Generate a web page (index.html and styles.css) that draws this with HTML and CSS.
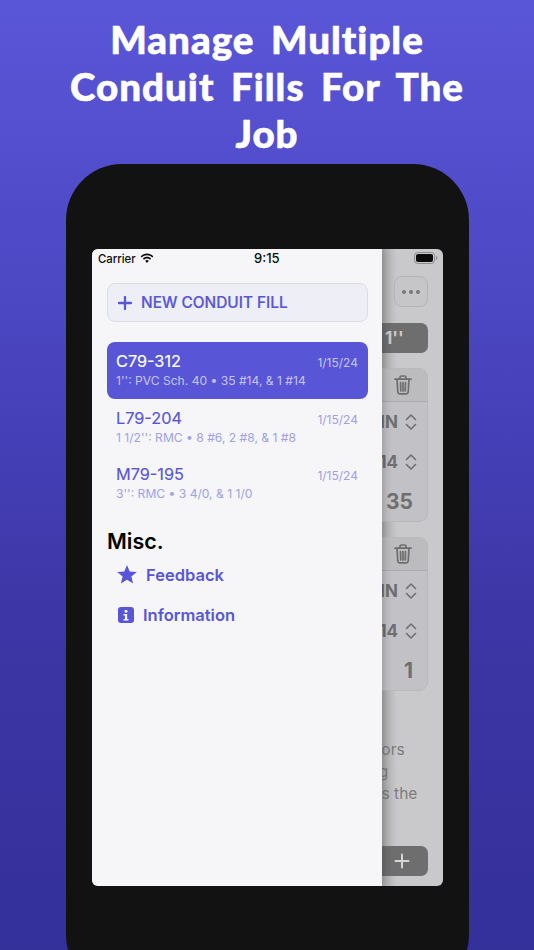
FILE: index.html
```html
<!DOCTYPE html>
<html lang="en">
<head>
<meta charset="utf-8">
<title>Manage Multiple Conduit Fills</title>
<link rel="stylesheet" href="styles.css">
</head>
<body>
<h1 class="headline">Manage Multiple Conduit Fills For The Job</h1>
<div class="stage">
<div class="phone">
  <div class="screen">
    <div class="main">
      <div class="battery-row">
        <svg class="battery" viewBox="0 0 24 12"><rect x="0.5" y="0.5" width="20" height="11" rx="3.2" fill="none" stroke="#8c8c8c"/><rect x="2" y="2" width="17" height="8" rx="2" fill="#0a0a0a"/><path d="M22 4v4c.8-.3 1.4-1.1 1.4-2s-.6-1.700-1.400-2z" fill="#8c8c8c"/></svg>
      </div>
      <div class="more-row"><div class="more"><i></i><i></i><i></i></div></div>
      <div class="size-pill">1''</div>
      <div class="card">
        <div class="card-head">
          <svg class="trash" viewBox="0 0 18 20"><path d="M1 4.200h16M6 4V2.600C6 1.700 6.700 1 7.600 1h2.800c.9 0 1.600.7 1.600 1.600V4M3 4.500l.8 12.500c.1 1 .8 1.800 1.900 1.800h6.600c1.100 0 1.800-.8 1.900-1.800L15 4.500M6.500 7.500l.3 8.500M9 7.500V16M11.500 7.500l-.3 8.500" fill="none" stroke="#6d6d6d" stroke-width="1.700" stroke-linecap="round"/></svg>
        </div>
        <div class="card-row"><span>THHN</span><svg class="updown" viewBox="0 0 12 18"><path d="M1.500 6.500L6 2l4.500 4.500M1.500 11.500L6 16l4.500-4.500" fill="none" stroke="#707070" stroke-width="1.600" stroke-linecap="round" stroke-linejoin="round"/></svg></div>
        <div class="card-row"><span>#14</span><svg class="updown" viewBox="0 0 12 18"><path d="M1.500 6.500L6 2l4.500 4.500M1.500 11.500L6 16l4.500-4.500" fill="none" stroke="#707070" stroke-width="1.600" stroke-linecap="round" stroke-linejoin="round"/></svg></div>
        <div class="card-count">35</div>
      </div>
      <div class="card">
        <div class="card-head">
          <svg class="trash" viewBox="0 0 18 20"><path d="M1 4.200h16M6 4V2.600C6 1.700 6.700 1 7.600 1h2.800c.9 0 1.600.7 1.600 1.600V4M3 4.500l.8 12.500c.1 1 .8 1.800 1.900 1.800h6.600c1.100 0 1.800-.8 1.900-1.800L15 4.500M6.500 7.500l.3 8.500M9 7.500V16M11.500 7.500l-.3 8.500" fill="none" stroke="#6d6d6d" stroke-width="1.700" stroke-linecap="round"/></svg>
        </div>
        <div class="card-row"><span>THHN</span><svg class="updown" viewBox="0 0 12 18"><path d="M1.500 6.500L6 2l4.500 4.500M1.500 11.500L6 16l4.500-4.500" fill="none" stroke="#707070" stroke-width="1.600" stroke-linecap="round" stroke-linejoin="round"/></svg></div>
        <div class="card-row"><span>#14</span><svg class="updown" viewBox="0 0 12 18"><path d="M1.500 6.500L6 2l4.500 4.500M1.500 11.500L6 16l4.500-4.500" fill="none" stroke="#707070" stroke-width="1.600" stroke-linecap="round" stroke-linejoin="round"/></svg></div>
        <div class="card-count">1</div>
      </div>
      <p class="note">Enter the wire types, and the conductors<br>Add each conduit that you're installing<br>And this page will show how much fills the</p>
      <div class="add-pill"><svg class="add-plus" viewBox="0 0 16 16"><path d="M8 1.500v13M1.500 8h13" stroke="#d6d6d6" stroke-width="2" stroke-linecap="round"/></svg></div>
    </div>
    <aside class="drawer">
      <div class="status">
        <span class="carrier">Carrier</span>
        <svg class="wifi" viewBox="0 0 16 12"><path d="M8 2.400c2.300 0 4.400.9 6 2.400l1.300-1.400C13.400 1.500 10.800.4 8 .4S2.600 1.500.7 3.400L2 4.800c1.600-1.500 3.700-2.400 6-2.400zM8 6c1.300 0 2.500.5 3.400 1.400l1.300-1.400C11.500 4.800 9.800 4.100 8 4.100S4.500 4.800 3.300 6l1.300 1.400C5.500 6.500 6.700 6 8 6zM8 7.700c-.8 0-1.500.3-2.100.8L8 11l2.100-2.500c-.6-.5-1.300-.8-2.100-.8z" fill="#0a0a0a"/></svg>
        <span class="clock">9:15</span>
      </div>
      <button class="new-fill" type="button">
        <svg class="new-plus" viewBox="0 0 14 14"><path d="M7 1v12M1 7h12" stroke="#5856d6" stroke-width="2.300" stroke-linecap="round"/></svg>
        <span>NEW CONDUIT FILL</span>
      </button>
      <ul class="fills">
        <li class="fill fill-active">
          <div class="fill-top"><span class="fill-name">C79-312</span><span class="fill-date">1/15/24</span></div>
          <div class="fill-sub">1'': PVC Sch. 40 • 35 #14, &amp; 1 #14</div>
        </li>
        <li class="fill">
          <div class="fill-top"><span class="fill-name">L79-204</span><span class="fill-date">1/15/24</span></div>
          <div class="fill-sub">1 1/2'': RMC • 8 #6, 2 #8, &amp; 1 #8</div>
        </li>
        <li class="fill">
          <div class="fill-top"><span class="fill-name">M79-195</span><span class="fill-date">1/15/24</span></div>
          <div class="fill-sub">3'': RMC • 3 4/0, &amp; 1 1/0</div>
        </li>
      </ul>
      <h2 class="misc">Misc.</h2>
      <a class="link link-star">
        <svg class="star" viewBox="0 0 20 19"><path d="M10 0l2.700 6.500 7.100.5-5.400 4.500 1.700 6.900L10 14.700l-6.100 3.700 1.700-6.900L.2 7l7.100-.5z" fill="#5856d6"/></svg>
        <span>Feedback</span>
      </a>
      <a class="link link-info">
        <svg class="info" viewBox="0 0 16 16"><rect width="16" height="16" rx="3" fill="#5856d6"/><circle cx="8" cy="4.300" r="1.500" fill="#f6f6f9"/><path d="M5.500 7h3.700v5h1.300v1.600h-5V12h1.500V8.600H5.500z" fill="#f6f6f9"/></svg>
        <span>Information</span>
      </a>
    </aside>
  </div>
</div>
</div>
</body>
</html>
```

FILE: styles.css
```css
* { box-sizing: border-box; }
html, body { margin: 0; padding: 0; }
html { overflow: hidden; }
body {
  width: 534px;
  height: 950px;
  overflow: hidden;
  background: linear-gradient(180deg, #5a56d8 0%, #4a45c0 35%, #3c36a6 65%, #34309a 100%);
  font-family: Inter, "Liberation Sans", sans-serif;
}
.headline {
  margin: 0;
  padding: 16px 40px 0;
  height: 164px;
  text-align: center;
  color: #fff;
  font-family: Lato, "Liberation Sans", sans-serif;
  font-weight: 900;
  font-size: 38.500px;
  line-height: 47px;
  letter-spacing: 1px;
  word-spacing: 6.500px;
  -webkit-text-stroke: .6px #fff;
}
.stage {
  height: 786px;
  overflow: hidden;
  padding-left: 66px;
  padding-right: 65px;
  padding-top: 0;
}
.phone {
  width: 403px;
  height: 827px;
  padding: 85px 26px 0;
  background: #121212;
  border-radius: 56px;
}
.screen {
  position: relative;
  width: 351px;
  height: 637px;
  border-radius: 6px;
  overflow: hidden;
  background: #cbcbcd;
}
.main {
  height: 100%;
  display: flex;
  flex-direction: column;
  align-items: flex-end;
  padding: 0 15px 0 0;
  background: linear-gradient(90deg, #a9a9aa 290px, #c9c9cb 305px);
}
.battery-row { height: 27px; padding: 3px 0 0; margin-right: -10px; width: 100%; display: flex; justify-content: flex-end; flex: none; }
.battery { width: 24px; height: 12px; }
.more-row { height: 47px; display: flex; align-items: flex-start; flex: none; }
.more {
  width: 34px;
  height: 31px;
  border: 1px solid #b4b4b6;
  border-radius: 8px;
  background: #c6c6c8;
  display: flex;
  gap: 3px;
  align-items: center;
  justify-content: center;
}
.more i { width: 4px; height: 4px; border-radius: 50%; background: #777; }
.size-pill {
  width: 90px;
  height: 30px;
  background: #6e6e6e;
  border-radius: 7px;
  color: #c9c9c9;
  font-weight: 700;
  font-size: 17px;
  line-height: 30px;
  padding-left: 47px;
  flex: none;
}
.card {
  width: 90px;
  height: 154px;
  margin-top: 15px;
  border: 1px solid #b9b9bb;
  border-radius: 9px;
  background: #c1c1c6;
  flex: none;
  overflow: hidden;
}
.card-head {
  height: 33px;
  background: #bcbcbe;
  border-bottom: 1px solid #acacae;
  display: flex;
  justify-content: flex-end;
  align-items: center;
  padding-right: 15px;
}
.trash { width: 18px; height: 20px; }
.card-row {
  height: 40px;
  display: flex;
  align-items: center;
  justify-content: flex-end;
  gap: 7px;
  padding-right: 10px;
  color: #6f6f6f;
  font-weight: 700;
  font-size: 17px;
  white-space: nowrap;
}
.updown { width: 12px; height: 18px; flex: none; }
.card-count {
  height: 40px;
  text-align: right;
  padding-right: 14px;
  color: #6f6f6f;
  font-weight: 700;
  font-size: 21px;
  line-height: 40px;
}
.note {
  margin: 48px 0 0;
  width: 321px;
  flex: none;
  white-space: nowrap;
  color: #7c7c7c;
  font-size: 15.500px;
  line-height: 22px;
}
.add-pill {
  width: 90px;
  height: 30px;
  margin-top: 41px;
  background: #6e6e6e;
  border-radius: 7px;
  display: flex;
  justify-content: flex-end;
  align-items: center;
  padding-right: 18px;
  flex: none;
}
.add-plus { width: 16px; height: 16px; }
.drawer {
  position: absolute;
  left: 0;
  top: 0;
  bottom: 0;
  width: 290px;
  background: #f6f6f9;
  padding: 0 14px 0 15px;
  box-shadow: 2px 0 8px rgba(0, 0, 0, .22);
}
.status {
  position: relative;
  height: 34px;
  margin-left: -9px;
  display: flex;
  align-items: center;
  padding-bottom: 15px;
  color: #0a0a0a;
}
.carrier { font-size: 11.300px; font-weight: 500; }
.wifi { width: 14px; height: 11px; margin-left: 4px; margin-top: -1px; }
.clock {
  position: absolute;
  left: 156px;
  top: 1px;
  font-size: 13px;
  font-weight: 500;
}
.new-fill {
  display: flex;
  align-items: center;
  gap: 9px;
  width: 261px;
  height: 39px;
  padding: 0 0 0 10px;
  border: 1px solid #dcdce4;
  border-radius: 8px;
  background: #eeeef6;
  color: #5856d6;
  font-family: inherit;
  font-size: 15.400px;
  font-weight: 500;
  -webkit-text-stroke: .2px currentColor;
}
.new-plus { width: 14px; height: 14px; }
.fills { list-style: none; margin: 20px 0 0; padding: 0; }
.fill {
  width: 261px;
  height: 56.500px;
  padding: 9px 10px 0 9px;
  border-radius: 8px;
}
.fill-active { background: #5856d6; }
.fill-top { display: flex; justify-content: space-between; align-items: center; height: 20px; }
.fill-name { font-size: 16.300px; font-weight: 400; color: #5856d6; -webkit-text-stroke: .15px currentColor; }
.fill-date { font-size: 12px; color: #a09fe8; padding-top: 3px; }
.fill-sub { margin-top: 2px; font-size: 12.100px; line-height: 16px; color: #a09fe8; white-space: nowrap; }
.fill-active .fill-name { color: #fff; }
.fill-active .fill-date,
.fill-active .fill-sub { color: #c6c5f0; }
.misc {
  margin: 16px 0 0;
  font-size: 21.500px;
  font-weight: 600;
  line-height: 26px;
  color: #000;
}
.link {
  display: flex;
  align-items: center;
  color: #5856d6;
  font-size: 16.500px;
  font-weight: 600;
}
.link-star { margin: 9px 0 0 10px; height: 24px; gap: 9px; }
.link-info { margin: 16px 0 0 11px; height: 24px; gap: 9px; }
.star { width: 20px; height: 19px; }
.info { width: 16px; height: 16px; }
```
